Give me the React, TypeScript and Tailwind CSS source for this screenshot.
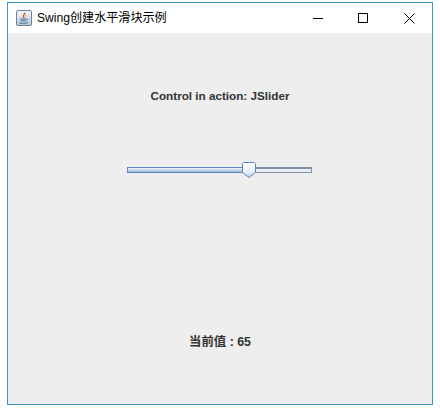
import React from 'react';

const font = "font-['Liberation_Sans','Noto_Sans_CJK_SC',sans-serif]";

const JavaIcon = () => (
  <svg width="16" height="16" viewBox="0 0 16 16" className="block">
    <defs>
      <linearGradient id="iconBg" x1="0" y1="0" x2="0" y2="1">
        <stop offset="0" stopColor="#f4f7fa" />
        <stop offset="1" stopColor="#b9c9da" />
      </linearGradient>
    </defs>
    <rect x="0.5" y="0.5" width="15" height="15" rx="1.5" fill="url(#iconBg)" stroke="#6f8297" />
    <path d="M8.5 2.5C9.5 4 6.8 5 7.2 6.5c.2.8.9 1.2 1.1 1.8" fill="none" stroke="#e0532a" strokeWidth="1.2" />
    <path d="M10.2 4C9 5 8.7 5.8 9.4 6.8" fill="none" stroke="#ee8a3c" strokeWidth="0.9" />
    <path d="M4 9h6.5M4.5 10.8h5.5M3 12.8c2 .8 7 .8 9-.3" fill="none" stroke="#3d6286" strokeWidth="0.9" />
    <path d="M10.5 9c1.7-.5 2 1.4 0 1.8" fill="none" stroke="#3d6286" strokeWidth="0.7" />
  </svg>
);

const WindowButtons = () => (
  <div className="flex items-center">
    <div className="w-[44px] h-[30px] flex items-center justify-center">
      <div className="w-[10px] h-px bg-black" />
    </div>
    <div className="w-[46px] h-[30px] flex items-center justify-center">
      <div className="w-[10px] h-[10px] border border-black" />
    </div>
    <div className="w-[46px] h-[30px] flex items-center justify-center">
      <svg width="11" height="11" viewBox="0 0 11 11">
        <path d="M0.5 0.5l10 10M10.5 0.5l-10 10" stroke="#000" strokeWidth="1" fill="none" />
      </svg>
    </div>
  </div>
);

const Slider = () => (
  <div className="relative w-[185px] h-[6px] border border-[#7d90a8] border-t-2 bg-[#e9eef4]">
    {/* filled part of the track */}
    <div className="absolute -left-px -top-[2px] w-[116px] h-[6px] border border-[#5f85c0] border-r-0 bg-gradient-to-b from-[#f2f6fb] to-[#9db8d8]" />
    {/* thumb */}
    <svg width="14" height="16" viewBox="0 0 14 16" className="absolute left-[114px] -top-[7px]">
      <defs>
        <linearGradient id="thumbFill" x1="0" y1="0" x2="0" y2="1">
          <stop offset="0" stopColor="#ffffff" />
          <stop offset="0.55" stopColor="#eef4fb" />
          <stop offset="1" stopColor="#bcd2ec" />
        </linearGradient>
      </defs>
      <path
        d="M1.5 0.5h11l1 1v9l-6.5 5l-6.5-5v-9z"
        fill="url(#thumbFill)"
        stroke="#5f85c0"
        strokeWidth="1"
      />
    </svg>
  </div>
);

export default function App() {
  return (
    <div className={`w-[440px] h-[410px] bg-white pt-[2px] pl-[7px] ${font}`}>
      <div className="w-[426px] h-[403px] border border-[#3c97c6] flex flex-col">
        <div className="h-[30px] bg-white flex items-center justify-between shrink-0">
          <div className="flex items-center pl-[8px] gap-[5px]">
            <JavaIcon />
            <span className="text-[12.1px] text-black leading-none">Swing创建水平滑块示例</span>
          </div>
          <WindowButtons />
        </div>
        <div className="flex-1 bg-[#eeeeee] flex flex-col items-center">
          <p className="mt-[56px] text-[11.7px] leading-[14px] font-bold text-[#333333]">Control in action: JSlider</p>
          <div className="mt-[64px] mr-[1px]">
            <Slider />
          </div>
          <p className="mt-[162px] text-[12.4px] leading-[14px] font-bold text-[#333333]">当前值 : 65</p>
        </div>
      </div>
    </div>
  );
}
